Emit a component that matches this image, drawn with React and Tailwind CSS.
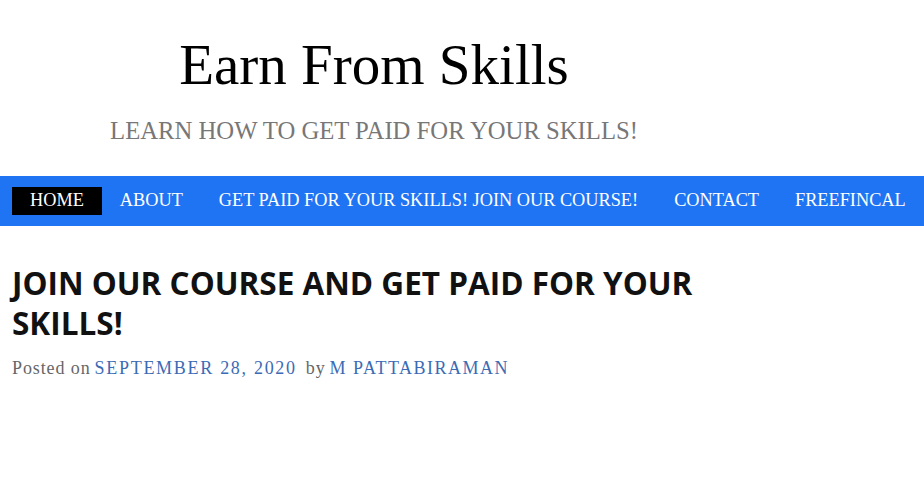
import React from "react";

const NAV = [
  "HOME",
  "ABOUT",
  "GET PAID FOR YOUR SKILLS! JOIN OUR COURSE!",
  "CONTACT",
  "FREEFINCAL",
];

const serif = { fontFamily: '"Liberation Serif", Georgia, serif' };

export default function App() {
  return (
    <div className="w-[924px] h-[485px] bg-white overflow-hidden" style={serif}>
      <header className="w-[748px] pt-[36px] text-center">
        <h1 className="text-[57px] leading-[57px] text-black font-normal">
          Earn From Skills
        </h1>
        <p className="mt-[24px] text-[24.7px] leading-[28px] text-[#777777]">
          LEARN HOW TO GET PAID FOR YOUR SKILLS!
        </p>
      </header>

      <nav className="mt-[31px] h-[50px] bg-[#1f74f4] flex items-center pl-[12px] whitespace-nowrap">
        {NAV.map((item, i) => (
          <span
            key={item}
            className={
              i === 0
                ? "h-[28px] flex items-center px-[18px] bg-black text-white text-[18.3px]"
                : "h-[28px] flex items-center px-[18px] text-white text-[18.3px]"
            }
          >
            {item}
          </span>
        ))}
      </nav>

      <main className="px-[12px] pt-[37px]">
        <h2
          className="text-[31.5px] leading-[40px] font-bold text-[#111111] w-[720px]"
          style={{ fontFamily: '"Open Sans", "Noto Sans", sans-serif' }}
        >
          JOIN OUR COURSE AND GET PAID FOR YOUR SKILLS!
        </h2>
        <div className="mt-[12px] flex items-baseline text-[18px] text-[#666666] whitespace-nowrap">
          <span className="tracking-[0.9px]">Posted on</span>
          <span className="ml-[4px] tracking-[1.7px] text-[#3b6bb5]">
            SEPTEMBER 28, 2020
          </span>
          <span className="ml-[9px] tracking-[0.9px]">by</span>
          <span className="ml-[4px] tracking-[1.5px] text-[#3b6bb5]">
            M PATTABIRAMAN
          </span>
        </div>
      </main>
    </div>
  );
}
